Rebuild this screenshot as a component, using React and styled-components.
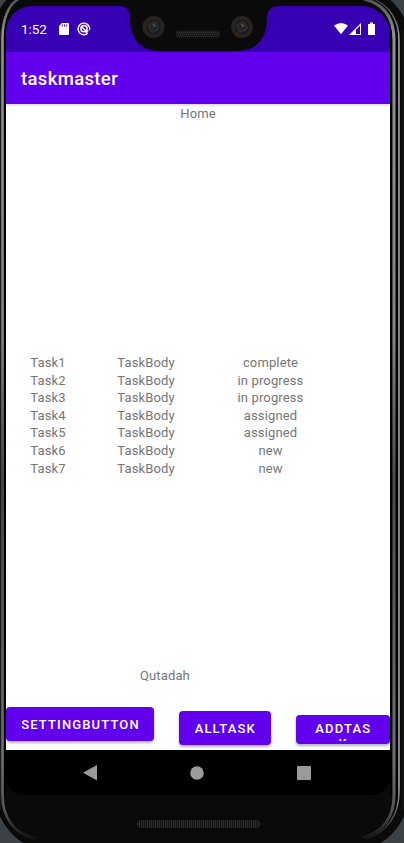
import React from "react";
import styled, { createGlobalStyle } from "styled-components";

const Global = createGlobalStyle`
  * { box-sizing: border-box; }
  html, body { margin: 0; overflow: hidden; background: #3b4145; }
  body { font-family: Roboto, sans-serif; -webkit-font-smoothing: antialiased; }
`;
const Stage = styled.div`
  width: 404px; height: 843px; overflow: hidden; position: relative;
  background: #3b4145;
`;
const Device = styled.div`
  width: 414px; height: 864px; margin: -12px 0 0 -5px; padding: 18px 0 0 11px;
  border-radius: 40px 52px 60px 60px;
  background: #0a0a0a;
  overflow: hidden;
`;
const Bezel = styled.svg`
  position: absolute; left: 0; top: 0; display: block; pointer-events: none;
`;
const Screen = styled.div`
  width: 384px; height: 789px; display: flex; flex-direction: column;
  border-radius: 26px 28px 18px 18px; overflow: hidden;
`;
const StatusBar = styled.header`
  height: 46px; flex: none; background: #3700b3; display: flex; justify-content: space-between;
  position: relative; color: #fff;
`;
const StatusGroup = styled.div`
  position: relative; display: flex; font-size: 13.5px; line-height: 17px;
  padding: 15px ${p => (p.$end ? 14 : 0)}px 0 ${p => (p.$end ? 0 : 15)}px;
  svg { display: block; flex: none; }
`;
const Time = styled.span`width: 36px; letter-spacing: -0.1px;`;
const Notch = styled.svg`position: absolute; left: 114px; top: -6px; display: block;`;
const AppBar = styled.div`
  height: 52px; flex: none; background: #6200ee; color: #fff; padding: 2px 15px 0;
  display: flex; align-items: center; font-size: 18.5px; font-weight: 500; letter-spacing: 0.35px;
  box-shadow: 0 1px 3px rgba(0,0,0,.2); position: relative;
`;
const Content = styled.main`
  flex: 1; min-height: 0; display: flex; flex-direction: column; color: #757575; background: #fff;
  font-size: 13px; line-height: 18px; letter-spacing: 0.13px;
`;
const Heading = styled.div`height: 19px; padding-top: 1px; text-align: center;`;
const TaskTable = styled.div`margin-top: 231px; height: 123px;`;
const TaskRow = styled.div`
  display: grid; grid-template-columns: 84px 112px 137px; height: 17.6px; line-height: 18px; text-align: center;
`;
const UserName = styled.div`margin-top: 190px; height: 18px; padding-left: 134px;`;
const Buttons = styled.div`
  display: flex; align-items: flex-start; margin-top: 22px; gap: 25px;
`;
const Button = styled.button`
  width: ${p => p.$w}px; height: ${p => p.$h}px; margin: ${p => p.$top}px 0 0; flex: none;
  border: 0; border-radius: 4px; padding: 0 0 0 1px; background: #6200ee; color: #fff;
  font: 500 13px/17px Roboto, sans-serif; letter-spacing: 1.15px; text-align: center;
  box-shadow: 0 2px 3px rgba(0,0,0,.3);
  display: flex; align-items: flex-start; justify-content: center;
`;
const Label = styled.span`
  display: block; margin-top: 9px;
`;
const WrappedLabel = styled(Label)`
  width: 64px; height: 20px; margin-top: 6px; line-height: 15px;
  overflow: hidden; overflow-wrap: anywhere;
`;
const NavBar = styled.nav`
  height: 45px; flex: none; background: #000;
  display: flex; align-items: center; padding-left: 77px; gap: 93px;
  svg { display: block; }
`;
const Speaker = styled.div`
  width: 123px; height: 8px; margin: 25px 0 0 131px; border-radius: 4px;
  background: repeating-linear-gradient(90deg, #292929 0 1px, #171717 1px 2px);
`;

const tasks = [
  ["Task1", "complete"], ["Task2", "in progress"], ["Task3", "in progress"],
  ["Task4", "assigned"], ["Task5", "assigned"], ["Task6", "new"], ["Task7", "new"],
];

const Camera = ({ x }) => (
  <g transform={`translate(${x} 27)`}>
    <circle r="11" fill="#29231f" />
    <circle r="7" fill="#171617" />
    <circle r="5.4" fill="#29292b" stroke="#363638" strokeWidth=".8" strokeDasharray="5 3" />
    <circle r="2.7" fill="#242427" />
    <path d="M-1-3 2-1M0 0l1-1" stroke="#716a6a" strokeWidth="1" />
  </g>
);

export default function App() {
  return (
    <>
      <Global />
      <Stage>
        <Device>
          <Screen>
            <StatusBar>
              <StatusGroup>
                <Time>1:52</Time>
                <svg width="34" height="16" viewBox="0 0 34 16">
                  <path d="M5 2h6q1 0 1 1v10q0 1-1 1H3q-1 0-1-1V5z" fill="#fff" />
                  <path d="M5.3 3.5v2M7.5 3.5v2M9.7 3.5v2" stroke="#3700b3" strokeWidth="1" />
                  <path d="M30.8 12.2A5.8 5.8 0 1 1 32.6 9" fill="none" stroke="#fff" strokeWidth="1.4" />
                  <circle cx="27" cy="7.7" r="3.1" fill="none" stroke="#fff" strokeWidth="1.5" />
                  <path d="m24.5 5.5 6 6" stroke="#fff" strokeWidth="1.5" />
                  <path d="m28.5 11.5 3-2" stroke="#fff" strokeWidth="1.2" />
                </svg>
              </StatusGroup>
              <StatusGroup $end>
                <svg width="42" height="16" viewBox="0 0 42 16">
                  <path d="M0 4.5Q7-0.5 14 4.5L7 13.3z" fill="#fff" />
                  <path d="M15 14 27 2v12z" fill="#fff" />
                  <path d="M22 8.7 26 4.7V13h-4z" fill="#3700b3" />
                  <path d="M34 3h2V1.5h3V3h2v11h-7z" fill="#fff" />
                </svg>
              </StatusGroup>
              <Notch width="160" height="52" viewBox="0 0 160 52">
                <path d="M0 0V6Q10 6 10 18C10 38 20 51 40 51H117C137 51 147 38 147 18Q147 6 159 6V0z" fill="#0a0a0a" />
                <Camera x={33.5} />
                <Camera x={122} />
                <rect x="56" y="30.5" width="44" height="7" rx="2" fill="#1a1a1a" />
                <path d="M57 32.5h42M58 34.5h41M57 36.5h42" stroke="#303030" strokeWidth="1" strokeDasharray="1 1" />
              </Notch>
            </StatusBar>
            <AppBar>taskmaster</AppBar>
            <Content>
              <Heading>Home</Heading>
              <TaskTable>
                {tasks.map(([name, state]) => (
                  <TaskRow key={name}><span>{name}</span><span>TaskBody</span><span>{state}</span></TaskRow>
                ))}
              </TaskTable>
              <UserName>Qutadah</UserName>
              <Buttons>
                <Button $w={148} $h={34} $top={0}><Label>SETTINGBUTTON</Label></Button>
                <Button $w={91.5} $h={34} $top={4}><Label>ALLTASK</Label></Button>
                <Button $w={94.5} $h={29} $top={8}><WrappedLabel>ADDTASK</WrappedLabel></Button>
              </Buttons>
            </Content>
            <NavBar>
              <svg width="14" height="16" viewBox="0 0 14 16"><path d="M14 0v15.5L0 7.8z" fill="#9b9b9b" /></svg>
              <svg width="14" height="14" viewBox="0 0 14 14"><circle cx="7" cy="7" r="6.8" fill="#9b9b9b" /></svg>
              <svg width="14" height="14" viewBox="0 0 14 14"><rect width="14" height="14" rx="1" fill="#9b9b9b" /></svg>
            </NavBar>
          </Screen>
          <Speaker />
        </Device>
        <Bezel width="404" height="843" viewBox="0 0 404 843" fill="none">
          <defs>
            <linearGradient id="rim" gradientUnits="userSpaceOnUse" x1="0" y1="0" x2="0" y2="843">
              <stop offset="0" stopColor="#555" />
              <stop offset=".04" stopColor="#918f8f" />
              <stop offset=".4" stopColor="#858383" />
              <stop offset=".57" stopColor="#4a4a4a" />
              <stop offset=".9" stopColor="#707070" />
              <stop offset=".96" stopColor="#555" />
              <stop offset="1" stopColor="#0a0a0a" />
            </linearGradient>
            <linearGradient id="edge" gradientUnits="userSpaceOnUse" x1="0" y1="0" x2="0" y2="843">
              <stop offset="0" stopColor="#333" />
              <stop offset=".05" stopColor="#aaa" />
              <stop offset=".93" stopColor="#aaa" />
              <stop offset="1" stopColor="#0a0a0a" />
            </linearGradient>
          </defs>
          <path d="M5 30V795M391 30V795" stroke="#000" strokeWidth="2" />
          <path d="M20-2C8 4 2.5 20 2.5 38V795C2.5 818 14 834 36 839" stroke="url(#rim)" strokeWidth="2.6" />
          <path d="M364-1C384 4 394 18 394 40V795C394 816 384 832 362 838" stroke="url(#rim)" strokeWidth="3" />
          <path d="M397 38V800" stroke="#000" strokeWidth="2" />
          <path d="M372-2C390 6 399 20 399 40V792C399 814 388 832 366 839" stroke="url(#edge)" strokeWidth="1.5" />
          <path d="M.5 30V810" stroke="#1b1b1b" />
          <path d="M402.5 30V810" stroke="#151515" strokeWidth="2" />
        </Bezel>
      </Stage>
    </>
  );
}
